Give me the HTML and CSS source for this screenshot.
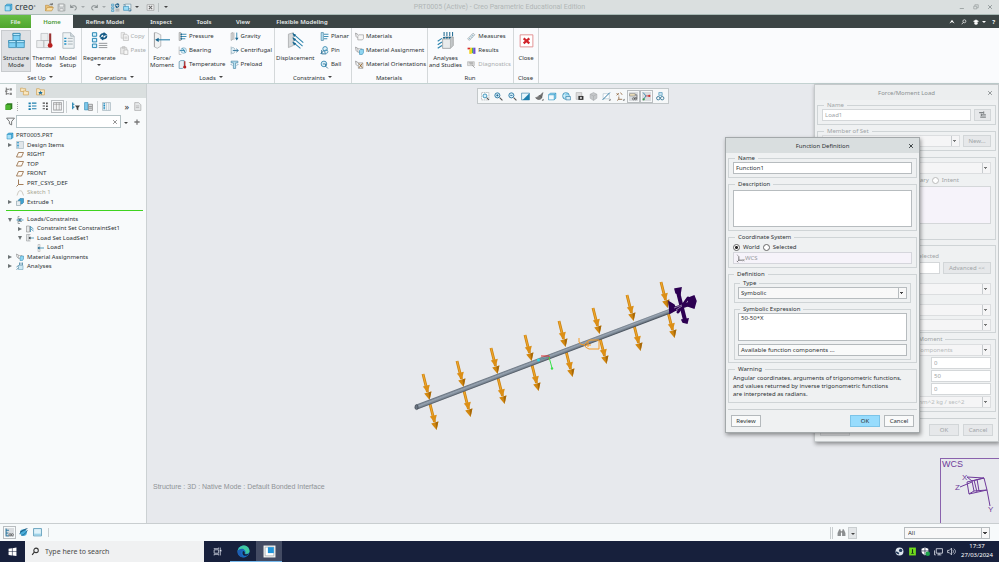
FILE: index.html
```html
<!DOCTYPE html>
<html lang="en">
<head>
  <meta charset="UTF-8">
  <title>PRT0005 (Active) - Creo Parametric Educational Edition</title>
  <link rel="stylesheet" href="styles.css">
</head>
<body>

  <!-- icon sprite -->
  <svg class="sprite" aria-hidden="true">
    <symbol id="i-cube" viewBox="0 0 16 16"><path d="M2 5l3-3h9v9l-3 3H2z" fill="#5cb8e4"/><path d="M2 5h9v9H2z" fill="#a8e0f8"/><path d="M2 5h9v9H2zM2 5l3-3h9v9l-3 3M11 5l3-3" fill="none" stroke="#1f86b5"/></symbol>
    <symbol id="i-style" viewBox="0 0 16 16"><path d="M1 5l3-3h10v9l-3 3H1z" fill="#7fc9ea"/><path d="M1 5h10v9H1z" fill="#f2fafd"/><path d="M1 5h10v9H1zM1 5l3-3h10v9l-3 3M11 5l3-3" fill="none" stroke="#2c93c0"/></symbol>
    <symbol id="i-open" viewBox="0 0 16 16"><path d="M1 14V4h5l1 2h6v3" fill="#e9c27a" stroke="#b98532"/><path d="M1 14l3-6h11l-3 6z" fill="#f5dca4" stroke="#b98532"/><path d="M8 4c1-3 4-3 5-1M13 0v3h-3" fill="none" stroke="#555" stroke-width="1.3"/></symbol>
    <symbol id="i-save" viewBox="0 0 16 16"><path d="M2 2h11l1 1v11H2z" fill="#d2d6d7" stroke="#9ba0a1" stroke-width="1.4"/><path d="M4 2h8v5H4zM5 10h6v4H5z" fill="#eef0f0" stroke="#9ba0a1"/></symbol>
    <symbol id="i-undo" viewBox="0 0 16 16"><path d="M3 3v5h5M3 8c3-5 10-4 10 1 0 2-1 3-3 4" fill="none" stroke="#8b9293" stroke-width="1.8"/></symbol>
    <symbol id="i-redo" viewBox="0 0 16 16"><path d="M13 3v5H8M13 8C10 3 3 4 3 9c0 2 1 3 3 4" fill="none" stroke="#8b9293" stroke-width="1.8"/></symbol>
    <symbol id="i-regen" viewBox="0 0 16 16"><path d="M1 2h4v3H1zM1 7h4v3H1zM1 12h4v3H1z" fill="#c8ecfb" stroke="#1c7fae"/><path d="M8 11h7M8 14h7" stroke="#777"/><path d="M8 5c0-3 3-4 5-3M14 4c0 3-3 4-5 3" fill="none" stroke="#155a86" stroke-width="1.8"/><path d="M12 0l3 3-4 1zM10 9L7 6l4-1z" fill="#155a86"/></symbol>
    <symbol id="i-windows" viewBox="0 0 16 16"><path d="M4 2h10v8H4z" fill="#eaf6fb" stroke="#5d7d8d"/><path d="M1 6h9v7H1z" fill="#9bdcf6" stroke="#1c7fae"/><path d="M10 14h4v-3M2 4V2" fill="none" stroke="#155a86" stroke-width="1.4"/></symbol>
    <symbol id="i-closewin" viewBox="0 0 16 16"><path d="M2 3h12v10H2z" fill="#f3f4f4" stroke="#888"/><path d="M5 5l6 6M11 5l-6 6" stroke="#666" stroke-width="1.8"/></symbol>
    <symbol id="i-min" viewBox="0 0 16 16"><path d="M2 12h11" stroke="#8e9596" stroke-width="2"/></symbol>
    <symbol id="i-restore" viewBox="0 0 16 16"><path d="M2 6h8v7H2zM5 6V2h9v8h-4" fill="none" stroke="#8e9596" stroke-width="1.6"/></symbol>
    <symbol id="i-x" viewBox="0 0 16 16"><path d="M3 3l10 10M13 3L3 13" stroke="currentColor" stroke-width="2.4"/></symbol>
    <symbol id="i-up" viewBox="0 0 16 16"><path d="M1 12l7-10 7 10-7-4z" fill="#fff"/></symbol>
    <symbol id="i-mag" viewBox="0 0 16 16"><circle cx="9" cy="6" r="4" fill="none" stroke="currentColor" stroke-width="1.8"/><path d="M6 9l-4 5" stroke="currentColor" stroke-width="2"/></symbol>
    <symbol id="i-learn" viewBox="0 0 16 16"><path d="M1 6l7-4 7 4-7 4zM4 9v4c2 2 6 2 8 0V9" fill="#fff" stroke="#fff"/></symbol>

    <symbol id="i-structure" viewBox="0 0 24 24"><path d="M7 2h10v10H7zM1 12h10v10H1zM12 12h11v10H12z" fill="#7ed0f4" stroke="#2a83ab"/><path d="M7 2h10v3H7zM1 12h10v3H1zM12 12h11v3H12z" fill="#b8e8fb" stroke="#2a83ab"/></symbol>
    <symbol id="i-thermal" viewBox="0 0 24 24"><path d="M7 2h10v10H7zM1 12h10v10H1zM11 12h9v10h-9z" fill="#eceeef" stroke="#b6babc"/><path d="M20 2v14" stroke="#9a3434" stroke-width="3"/><circle cx="20" cy="19" r="3.4" fill="#b81f1f"/></symbol>
    <symbol id="i-model" viewBox="0 0 24 24"><path d="M4 1h11l5 5v17H4z" fill="#eef2f4" stroke="#9eabb3"/><path d="M15 1v5h5" fill="#d5dde2" stroke="#9eabb3"/><path d="M11 9h7M11 13h7M11 17h7" stroke="#8a979f"/><path d="M6 8h3v2H6zM6 12h3v2H6zM6 16h3v2H6z" fill="#2190c4"/></symbol>
    <symbol id="i-regen-l" viewBox="0 0 24 24"><path d="M2 1h6v5H2zM2 9h6v5H2zM2 17h6v5H2z" fill="#d4f0fc" stroke="#1c7fae" stroke-width="1.3"/><path d="M11 16h12M11 19h12M11 22h12" stroke="#8b9093" stroke-width="1.3"/><path d="M13 7c0-4 4-5 6-4M22 5c0 4-4 5-6 4" fill="none" stroke="#155a86" stroke-width="2.4"/><path d="M18 0l5 4-6 2zM17 12l-5-4 6-2z" fill="#155a86"/></symbol>
    <symbol id="i-copy" viewBox="0 0 16 16"><path d="M2 1h6v10H2z" fill="#eee" stroke="#bbb"/><path d="M6 4h6l3 3v8H6z" fill="#f2f2f2" stroke="#aaa"/><path d="M8 9h5M8 11h5" stroke="#bbb"/></symbol>
    <symbol id="i-paste" viewBox="0 0 16 16"><path d="M1 3h11v11H1zM4 1h5v3H4z" fill="#e8e8e8" stroke="#b4b4b4"/><path d="M7 7h7v8H7z" fill="#f6f6f6" stroke="#aaa"/></symbol>
    <symbol id="i-force-l" viewBox="0 0 24 24"><path d="M2 1h3l6 3v16l-5 3-4-2z" fill="#f1f2f3" stroke="#a3a6a8"/><path d="M2 1v20" stroke="#999"/><path d="M5 11h19" stroke="#2c83ac" stroke-width="1.6"/><path d="M3 11l5-3v6z" fill="#17648d"/></symbol>
    <symbol id="i-force" viewBox="0 0 16 16"><path d="M4 1v14M4 1h4v14H4" fill="#eee" stroke="#a5a5a5"/><path d="M5 8h11" stroke="#2c83ac" stroke-width="1.6"/><path d="M3 8l4-3v6z" fill="#17648d"/></symbol>
    <symbol id="i-pressure" viewBox="0 0 16 16"><path d="M2 1h3v14H2z" fill="#ddd" stroke="#888"/><path d="M5 4h10M5 8h10M5 12h8" stroke="#2c83ac" stroke-width="1.6"/><path d="M4 4l3-2v4zM4 8l3-2v4zM4 12l3-2v4z" fill="#17648d"/></symbol>
    <symbol id="i-bearing" viewBox="0 0 16 16"><path d="M2 1v14h4" fill="none" stroke="#999"/><circle cx="10" cy="8" r="5" fill="#d5ecf6" stroke="#6d9db4"/><path d="M3 8h9M8 4l5 8" stroke="#2c83ac" stroke-width="1.5"/></symbol>
    <symbol id="i-temp" viewBox="0 0 16 16"><path d="M2 3l3-2h6v11l-3 3H2z" fill="#e6f1f6" stroke="#2b6f91"/><path d="M12 2v9" stroke="#a33" stroke-width="2.4"/><circle cx="12" cy="12.500" r="2.800" fill="#b81f1f"/></symbol>
    <symbol id="i-gravity" viewBox="0 0 16 16"><path d="M2 2l3-1v12l-3 2zM7 1v13" fill="#eee" stroke="#888"/><path d="M12 1v11" stroke="#2c83ac" stroke-width="1.6"/><path d="M12 15l-3-5h6z" fill="#17648d"/></symbol>
    <symbol id="i-centri" viewBox="0 0 16 16"><path d="M2 1v14M2 4c4-3 7 0 7 4s-3 7-7 4" fill="#e2f0f7" stroke="#7796a5"/><path d="M5 8h9M11 5l4 3-4 3" fill="none" stroke="#17648d" stroke-width="1.4"/></symbol>
    <symbol id="i-preload" viewBox="0 0 16 16"><path d="M2 2h12v3h-4v10H6V5H2z" fill="#b7e1f3" stroke="#2b6f91"/><path d="M1 7l3 3M15 7l-3 3" stroke="#17648d"/></symbol>
    <symbol id="i-disp-l" viewBox="0 0 24 24"><path d="M2 3l7-2v18l-7 3z" fill="#d7d9da" stroke="#a0a3a5"/><path d="M8 2l15 13M8 8l14 12M8 14l11 9" stroke="#2c83ac" stroke-width="1.5"/><path d="M8 2l5 2-3 3zM8 8l5 2-3 3zM8 14l5 2-3 3z" fill="#17648d"/></symbol>
    <symbol id="i-planar" viewBox="0 0 16 16"><path d="M2 1h4v14H2z" fill="#b7e1f3" stroke="#2b6f91"/><path d="M7 4h8M7 8h8M7 12h6" stroke="#2c83ac" stroke-width="1.6"/></symbol>
    <symbol id="i-pin" viewBox="0 0 16 16"><circle cx="9" cy="5" r="4" fill="#dff2fa" stroke="#2c83ac" stroke-width="1.5"/><path d="M1 14l6-6M3 7v7h8" fill="none" stroke="#17648d" stroke-width="1.5"/><circle cx="11" cy="10" r="3" fill="none" stroke="#2c83ac" stroke-width="1.3"/></symbol>
    <symbol id="i-ball" viewBox="0 0 16 16"><circle cx="7" cy="7" r="5" fill="#dff2fa" stroke="#2c83ac" stroke-width="1.5"/><path d="M5 7h5v4M10 11l4 4" fill="none" stroke="#17648d" stroke-width="1.4"/></symbol>
    <symbol id="i-mat" viewBox="0 0 16 16"><path d="M1 2l5 3M1 2l1 6 3 3" fill="none" stroke="#666"/><path d="M5 7l2-2h8v7l-2 2H5z" fill="#f7f7f7" stroke="#888"/></symbol>
    <symbol id="i-mata" viewBox="0 0 16 16"><path d="M1 2l5 3M1 2l1 6 3 3" fill="none" stroke="#666"/><path d="M5 5h7v6H5z" fill="#f7f7f7" stroke="#888"/><path d="M8 8l2-2h5v6l-2 3H8z" fill="#8fd5f1" stroke="#2b85ae"/></symbol>
    <symbol id="i-mato" viewBox="0 0 16 16"><path d="M1 2l5 3M1 2l1 6 3 3" fill="none" stroke="#666"/><path d="M6 5h8v10H6z" fill="#eee" stroke="#888"/><path d="M7 6l6 8M13 6l-6 8" stroke="#8a5a20" stroke-width="1.4"/></symbol>
    <symbol id="i-analyses-l" viewBox="0 0 24 24"><path d="M8 10l3-3h12v12l-4 4H8z" fill="#c3c7c9" stroke="#96999b"/><path d="M8 10h11v13H8z" fill="#e9ebec" stroke="#a5a8aa"/><path d="M10 0v6M14 0v6M18 0v6M22 0v6" stroke="#17648d" stroke-width="1.4"/><path d="M8 7l4 0-2 3zM12 7h4l-2 3zM16 7h4l-2 3z" fill="#17648d"/><path d="M1 13l6-4M1 18l6-4M1 23l6-4" stroke="#2c83ac" stroke-width="1.6"/></symbol>
    <symbol id="i-measure" viewBox="0 0 16 16"><path d="M1 12L11 2l3 3L4 15z" fill="#e4eaed" stroke="#87959c"/><path d="M4 11l2 2M7 8l2 2M9 5l2 2" stroke="#2c83ac"/></symbol>
    <symbol id="i-results" viewBox="0 0 16 16"><path d="M1 3h5v3H1z" fill="#d82a2a"/><path d="M4 6h4v8H4z" fill="#f2d325"/><path d="M6 3h3v10H6z" fill="#f2d325"/><path d="M9 3h2v10H9z" fill="#3fae49"/><path d="M11 3h4v11h-4z" fill="#6a4fd0"/></symbol>
    <symbol id="i-diag" viewBox="0 0 16 16"><path d="M1 3h12v7H1z" fill="#e2e2e2" stroke="#aaa"/><path d="M3 5h8M5 7h6M9 9l5 5" stroke="#999" stroke-width="1.4"/></symbol>
    <symbol id="i-closered" viewBox="0 0 24 24"><path d="M3 4h18v17H3z" fill="#fff" stroke="#e08a8c" stroke-width="1.3"/><path d="M8 9l8 7M16 9l-8 7" stroke="#d2232a" stroke-width="3"/></symbol>

    <symbol id="i-treetab" viewBox="0 0 16 16"><path d="M4 1v13M4 4h5M4 12h5" stroke="#666" stroke-width="1.6"/><path d="M10 2h4v4h-4zM10 10h4v4h-4zM2 6h4v3H2z" fill="#888"/></symbol>
    <symbol id="i-folders" viewBox="0 0 16 16"><path d="M1 2h4l1 1h4v5H1z" fill="#f9e7c0" stroke="#c8943d"/><path d="M6 7h4l1 1h4v6H6z" fill="#f9e7c0" stroke="#c8943d"/></symbol>
    <symbol id="i-fav" viewBox="0 0 16 16"><path d="M1 3h5l1 2h8v9H1z" fill="#f9e7c0" stroke="#c8943d"/><path d="M8 6l1 3h3l-2 2 1 3-3-2-3 2 1-3-2-2h3z" fill="#1c6e9c"/></symbol>
    <symbol id="i-green" viewBox="0 0 16 16"><path d="M1 5l3-3h9v9l-3 3H1z" fill="#2e7a1f"/><path d="M1 5h9v9H1z" fill="#4db52f"/></symbol>
    <symbol id="i-list" viewBox="0 0 16 16"><path d="M1 1h4v3H1zM1 6h4v3H1zM1 11h4v3H1z" fill="#1c7fae"/><path d="M7 2h8M7 7h8M7 12h8" stroke="#1c7fae" stroke-width="2"/></symbol>
    <symbol id="i-list2" viewBox="0 0 16 16"><path d="M3 2h4M3 7h4M3 12h4" stroke="#444" stroke-width="2"/><path d="M9 1h3v3H9zM9 6h3v3H9zM9 11h3v3H9z" fill="#444"/></symbol>
    <symbol id="i-cols" viewBox="0 0 16 16"><path d="M1 1h14v13H1zM1 4h14M6 1v13M11 1v13" fill="#f3f4f5" stroke="#888"/></symbol>
    <symbol id="i-tfilter" viewBox="0 0 16 16"><path d="M3 1v12M3 4h3M3 9h3" stroke="#1c7fae" stroke-width="2"/><path d="M7 6h9l-3 4v5l-3-2v-3z" fill="#444"/></symbol>
    <symbol id="i-tcols" viewBox="0 0 16 16"><path d="M1 1h6v13H1z" fill="#7fc9ea" stroke="#1c7fae"/><path d="M8 4h7v11H8z" fill="#d9dcde" stroke="#666"/><path d="M9 8h5M9 11h5" stroke="#666"/></symbol>
    <symbol id="i-design" viewBox="0 0 16 16"><path d="M1 1h14v14H1z" fill="#f3f6f8" stroke="#8aa0ac"/><path d="M4 2v12" stroke="#1c8bc0" stroke-width="3" stroke-dasharray="2 1"/><path d="M8 1v14M12 1v14" stroke="#a9b7bf"/></symbol>
    <symbol id="i-page" viewBox="0 0 16 16"><path d="M3 1h7l4 4v10H3z" fill="#e6e8e9" stroke="#999"/><path d="M5 7h6M5 10h6" stroke="#999"/></symbol>
    <symbol id="i-funnel" viewBox="0 0 16 16"><path d="M1 2h14L10 8v6l-4-2V8z" fill="#f8fafb" stroke="#555" stroke-width="1.4"/></symbol>
    <symbol id="i-plus" viewBox="0 0 16 16"><path d="M8 1v14M1 8h14" stroke="#777" stroke-width="3.4"/></symbol>
    <symbol id="i-plane" viewBox="0 0 16 16"><path d="M5 3h10l-4 9H1z" fill="#fdfaf5" stroke="#8b5e34" stroke-width="1.500"/></symbol>
    <symbol id="i-csys" viewBox="0 0 16 16"><path d="M5 1v10h10M5 11l-4 4" fill="none" stroke="#8b5e34" stroke-width="1.6"/></symbol>
    <symbol id="i-sketch" viewBox="0 0 16 16"><path d="M2 13l3-8c2-2 5-2 7 0l3 8" fill="none" stroke="#bdb8ae" stroke-width="1.5"/></symbol>
    <symbol id="i-extrude" viewBox="0 0 16 16"><path d="M5 4l3-3h7v8l-3 3H5z" fill="#3fa2d0" stroke="#1c6e9c"/><path d="M1 6h8v9H1z" fill="#e8eef1" stroke="#6f8793"/></symbol>
    <symbol id="i-lc" viewBox="0 0 16 16"><path d="M7 1H4v14h4M4 5h8M4 11h8" fill="none" stroke="#7c858a" stroke-width="1.4"/><path d="M1 8h14" stroke="#1c7fae" stroke-width="1.4"/><path d="M5 8l4-3v6z" fill="#155a86"/></symbol>
    <symbol id="i-lset" viewBox="0 0 16 16"><path d="M1 1h5v13H1zM6 1h3M6 14h3" fill="#e3e5e6" stroke="#8b8f91"/><path d="M7 8h9" stroke="#2c83ac" stroke-width="1.5"/><path d="M5 8l4-3v6z" fill="#333"/></symbol>
    <symbol id="i-cset" viewBox="0 0 16 16"><path d="M1 2h6v12H1z" fill="#e8eaeb" stroke="#777"/><path d="M9 2v12M10 4l5 4M10 8l5 4" stroke="#2c83ac" stroke-width="1.5"/></symbol>
    <symbol id="i-study" viewBox="0 0 16 16"><path d="M5 7h9v8H5z" fill="#cfe9f5" stroke="#5a93ad"/><path d="M7 1v5M10 1v5M13 1v5M1 10l4-3M1 15l4-3" stroke="#17648d" stroke-width="1.3"/></symbol>

    <symbol id="i-refit" viewBox="0 0 16 16"><path d="M1 1h13v13H1z" fill="#fff" stroke="#8f9698" stroke-dasharray="3 1"/><circle cx="7" cy="7" r="3.500" fill="#d7f0fa" stroke="#1c7fae" stroke-width="1.400"/><path d="M10 10l4 4" stroke="#555" stroke-width="2"/></symbol>
    <symbol id="i-zin" viewBox="0 0 16 16"><circle cx="6" cy="6" r="4.5" fill="#d7f0fa" stroke="#1c6e9c" stroke-width="1.5"/><path d="M4 6h4M6 4v4" stroke="#155a86" stroke-width="1.4"/><path d="M10 10l5 5" stroke="#555" stroke-width="2"/></symbol>
    <symbol id="i-zout" viewBox="0 0 16 16"><circle cx="6" cy="6" r="4.5" fill="#d7f0fa" stroke="#1c6e9c" stroke-width="1.5"/><path d="M4 6h4" stroke="#155a86" stroke-width="1.4"/><path d="M10 10l5 5" stroke="#555" stroke-width="2"/></symbol>
    <symbol id="i-repaint" viewBox="0 0 16 16"><path d="M1 2h14v12H1z" fill="#e6f6fc" stroke="#1c6e9c"/><path d="M15 2v12H3z" fill="#1c7fae"/></symbol>
    <symbol id="i-brush" viewBox="0 0 16 16"><path d="M14 1L8 7l4 3zM9 6c-3 0-4 4-8 4 2 4 11 5 11-1z" fill="#777" stroke="#555"/><path d="M12 15h3v-3z" fill="#333"/></symbol>
    <symbol id="i-globe" viewBox="0 0 16 16"><circle cx="7" cy="7" r="6" fill="#8ed3ef" stroke="#1c6e9c"/><path d="M1 7h12M7 1c-4 4-4 8 0 12" fill="none" stroke="#fff"/><path d="M7 8h8v6H7z" fill="#d5ecf6" stroke="#1c6e9c"/></symbol>
    <symbol id="i-camera" viewBox="0 0 16 16"><path d="M2 1h10v12H2z" fill="#ddd" stroke="#aaa"/><path d="M6 7h9v7H6z" fill="#333"/><circle cx="10.500" cy="10.500" r="2" fill="#ccc"/></symbol>
    <symbol id="i-greycube" viewBox="0 0 16 16"><path d="M2 4l6-3 6 3v7l-6 4-6-4z" fill="#c5c8ca" stroke="#a5a9ab"/><path d="M2 4l6 3 6-3M8 7v8" fill="none" stroke="#a5a9ab"/></symbol>
    <symbol id="i-section" viewBox="0 0 16 16"><path d="M2 3h11v9H2z" fill="#fff" stroke="#9fb8c4"/><path d="M1 14L14 1" stroke="#1c6e9c" stroke-width="1.6"/><path d="M12 15h3v-3z" fill="#333"/></symbol>
    <symbol id="i-datum" viewBox="0 0 16 16"><path d="M1 2l4 4M5 2L1 6M8 1l3 4M5 8v5h6M5 13l-3 2" fill="none" stroke="#8b5e34" stroke-width="1.4"/><path d="M12 15h3v-3z" fill="#333"/></symbol>
    <symbol id="i-annot" viewBox="0 0 16 16"><path d="M1 3h10v4H1z" fill="#f6e7bf" stroke="#777"/><path d="M11 5h3v6H8" fill="none" stroke="#444"/><circle cx="8" cy="12" r="2" fill="none" stroke="#444"/><circle cx="12" cy="12" r="2" fill="none" stroke="#444"/></symbol>
    <symbol id="i-spin" viewBox="0 0 16 16"><path d="M2 1l5 6-5 7" fill="none" stroke="#2c83ac" stroke-width="1.5"/><path d="M7 7h6" stroke="#c33" stroke-width="1.5"/><circle cx="13" cy="7" r="2" fill="#c33"/><circle cx="3" cy="13" r="2" fill="#3b9b4a"/></symbol>
    <symbol id="i-sims" viewBox="0 0 16 16"><path d="M5 1h6v5H5z" fill="#cfe9f5" stroke="#2c83ac"/><circle cx="4" cy="11" r="3" fill="none" stroke="#2c6f91" stroke-width="1.5"/><circle cx="11" cy="11" r="3" fill="none" stroke="#2c6f91" stroke-width="1.5"/></symbol>
    <symbol id="i-flip" viewBox="0 0 16 16"><path d="M2 3h8M6 7h8M4 11h10M10 1v4M6 5v4" stroke="#808487" stroke-width="2.200"/></symbol>
    <symbol id="i-wcs" viewBox="0 0 16 16"><path d="M5 4v7h7M5 11l-3 3" fill="none" stroke="#555" stroke-width="1.4"/><path d="M2 1l2 3M1 12l3 3M12 9l3 4M15 9l-3 4" stroke="#777"/></symbol>

    <symbol id="i-nav" viewBox="0 0 16 16"><path d="M2 1v13h5M2 4h5M2 9h4" fill="none" stroke="#1c6e9c" stroke-width="1.6"/><circle cx="9" cy="12" r="2" fill="none" stroke="#333"/><circle cx="13" cy="12" r="2" fill="none" stroke="#333"/></symbol>
    <symbol id="i-browser" viewBox="0 0 16 16"><circle cx="8" cy="8" r="6" fill="#4aaedb"/><path d="M2 6c4 0 8-2 11-4M4 13c5 0 8-4 11-9M1 11C4 5 9 2 15 1" fill="none" stroke="#15587f" stroke-width="1.400"/></symbol>
    <symbol id="i-screen" viewBox="0 0 16 16"><path d="M1 1h14v13H1z" fill="#dff2fa" stroke="#4a8fb0" stroke-width="1.4"/><path d="M2 10h12v3H2z" fill="#9bd3ea"/></symbol>
    <symbol id="i-find" viewBox="0 0 16 16"><path d="M4 2h2l1 4v8H1V9zM12 2h-2L9 6v8h6V9z" fill="#8c8f91"/><path d="M6 7h4" stroke="#777" stroke-width="2"/></symbol>

    <symbol id="i-win" viewBox="0 0 16 16"><path d="M1 3l6-1v6H1zM8 2l7-1v7H8zM1 9h6v6l-6-1zM8 9h7v7l-7-1z" fill="#fff"/></symbol>
    <symbol id="i-task" viewBox="0 0 16 16"><path d="M2 5h8v6H2zM2 2v1h8V1M2 15v-2h8v2M13 1v4M13 8v7" fill="none" stroke="#dfe3ee" stroke-width="1.3"/><path d="M12 5h3v3h-3z" fill="#dfe3ee"/></symbol>
    <symbol id="i-edge" viewBox="0 0 24 24"><circle cx="12" cy="12" r="11" fill="#1673c9"/><path d="M1 11C3 3 10 0 15 1c6 2 9 7 8 12-1 3-5 4-8 3 2-3 0-8-5-8-4 0-7 1-9 3z" fill="#3fc7a0"/><path d="M1 11c4-5 11-5 13-1-4-1-7 2-6 6 1 4 4 6 8 6C8 25 0 19 1 11z" fill="#1d5fb4"/><path d="M11 11c3 0 4 3 3 5 2 2 6 1 8-1-1 3-4 5-7 5-4 0-6-4-4-9z" fill="#17203c"/></symbol>
    <symbol id="i-app" viewBox="0 0 24 24"><path d="M1 1h22v22H1z" fill="#f3f3f1"/><path d="M4 4h16v16H4z" fill="#fff" stroke="#7c8b94"/><path d="M9 4h11v11H9z" fill="#1f94da"/></symbol>
    <symbol id="i-steam" viewBox="0 0 16 16"><circle cx="8" cy="8" r="7" fill="#dfe6ee"/><circle cx="10" cy="6" r="3" fill="#223a5c"/><path d="M2 9l5 3" stroke="#223a5c" stroke-width="3"/></symbol>
    <symbol id="i-nv" viewBox="0 0 16 16"><path d="M2 1h12v14H2z" fill="#6fdb1c"/><path d="M5 12l2-2V5c0-2 2-2 2 0v5l2 2z" fill="#17301a"/></symbol>
    <symbol id="i-shield" viewBox="0 0 16 16"><path d="M7 1l6 2v5c0 3-3 5-6 7-3-2-6-4-6-7V3z" fill="#fff"/><path d="M7 1v14M1 7h12" stroke="#17203c" stroke-width="1.2"/><circle cx="12" cy="12" r="4" fill="#1ea54a"/></symbol>
    <symbol id="i-net" viewBox="0 0 16 16"><path d="M4 3h11v8H4zM9 11v3M6 14h7M1 6v8h2" fill="none" stroke="#e8ebf3" stroke-width="1.4"/></symbol>
    <symbol id="i-vol" viewBox="0 0 16 16"><path d="M1 6h3l4-4v12l-4-4H1z" fill="none" stroke="#e8ebf3" stroke-width="1.3"/><path d="M10 5c2 2 2 4 0 6M12 3c4 3 4 7 0 10" fill="none" stroke="#e8ebf3" stroke-width="1.2"/></symbol>
  </svg>

  <header class="titlebar">
    <div class="quick">
      <span class="brand"><svg class="ic"><use href="#i-cube"/></svg>creo<sup>°</sup></span>
      <button aria-label="Open"><svg class="ic"><use href="#i-open"/></svg></button>
      <button aria-label="Save"><svg class="ic"><use href="#i-save"/></svg></button>
      <button class="drop soft" aria-label="Undo"><svg class="ic"><use href="#i-undo"/></svg></button>
      <button class="drop soft" aria-label="Redo"><svg class="ic"><use href="#i-redo"/></svg></button>
      <button aria-label="Regenerate"><svg class="ic"><use href="#i-regen"/></svg></button>
      <button class="drop" aria-label="Windows"><svg class="ic"><use href="#i-windows"/></svg></button>
      <button class="last" aria-label="Close window"><svg class="ic"><use href="#i-closewin"/></svg></button>
      <button class="drop" aria-label="Customize"></button>
    </div>
    <div class="app-title">PRT0005 (Active) - Creo Parametric Educational Edition</div>
    <div class="win-controls">
      <button aria-label="Minimize"><svg class="ic-s"><use href="#i-min"/></svg></button>
      <button aria-label="Restore"><svg class="ic-s"><use href="#i-restore"/></svg></button>
      <button aria-label="Close"><svg class="ic-s"><use href="#i-x"/></svg></button>
    </div>
  </header>

  <nav class="tabs">
    <button class="tab file">File</button>
    <button class="tab home">Home</button>
    <button class="tab refine">Refine Model</button>
    <button class="tab inspect">Inspect</button>
    <button class="tab tools">Tools</button>
    <button class="tab view">View</button>
    <button class="tab flexible">Flexible Modeling</button>
    <div class="tab-tools">
      <button aria-label="Collapse ribbon"><svg class="ic-s"><use href="#i-up"/></svg></button>
      <button aria-label="Search"><svg class="ic-s"><use href="#i-mag"/></svg></button>
      <button class="drop" aria-label="Learning"><svg class="ic-s"><use href="#i-learn"/></svg></button>
      <button>?</button>
    </div>
  </nav>

  <div class="ribbon">
    <section class="group setup">
      <div class="group-body">
        <button class="big active"><svg><use href="#i-structure"/></svg>Structure<br>Mode</button>
        <button class="big"><svg><use href="#i-thermal"/></svg>Thermal<br>Mode</button>
        <button class="big"><svg><use href="#i-model"/></svg>Model<br>Setup</button>
      </div>
      <div class="group-label drop">Set Up</div>
    </section>
    <section class="group operations">
      <div class="group-body">
        <button class="big"><svg><use href="#i-regen-l"/></svg>Regenerate<span class="caret"></span></button>
        <div class="stack">
          <button class="small" disabled><svg><use href="#i-copy"/></svg>Copy</button>
          <button class="small" disabled><svg><use href="#i-paste"/></svg>Paste</button>
        </div>
      </div>
      <div class="group-label drop">Operations</div>
    </section>
    <section class="group loads">
      <div class="group-body">
        <button class="big"><svg><use href="#i-force-l"/></svg>Force/<br>Moment</button>
        <div class="stack">
          <button class="small"><svg><use href="#i-pressure"/></svg>Pressure</button>
          <button class="small"><svg><use href="#i-bearing"/></svg>Bearing</button>
          <button class="small"><svg><use href="#i-temp"/></svg>Temperature</button>
        </div>
        <div class="stack">
          <button class="small"><svg><use href="#i-gravity"/></svg>Gravity</button>
          <button class="small"><svg><use href="#i-centri"/></svg>Centrifugal</button>
          <button class="small"><svg><use href="#i-preload"/></svg>Preload</button>
        </div>
      </div>
      <div class="group-label drop">Loads</div>
    </section>
    <section class="group constraints">
      <div class="group-body">
        <button class="big"><svg><use href="#i-disp-l"/></svg>Displacement</button>
        <div class="stack">
          <button class="small"><svg><use href="#i-planar"/></svg>Planar</button>
          <button class="small"><svg><use href="#i-pin"/></svg>Pin</button>
          <button class="small"><svg><use href="#i-ball"/></svg>Ball</button>
        </div>
      </div>
      <div class="group-label drop">Constraints</div>
    </section>
    <section class="group materials">
      <div class="group-body">
        <div class="stack">
          <button class="small"><svg><use href="#i-mat"/></svg>Materials</button>
          <button class="small"><svg><use href="#i-mata"/></svg>Material Assignment</button>
          <button class="small"><svg><use href="#i-mato"/></svg>Material Orientations</button>
        </div>
      </div>
      <div class="group-label">Materials</div>
    </section>
    <section class="group run">
      <div class="group-body">
        <button class="big"><svg><use href="#i-analyses-l"/></svg>Analyses<br>and Studies</button>
        <div class="stack">
          <button class="small"><svg><use href="#i-measure"/></svg>Measures</button>
          <button class="small"><svg><use href="#i-results"/></svg>Results</button>
          <button class="small" disabled><svg><use href="#i-diag"/></svg>Diagnostics</button>
        </div>
      </div>
      <div class="group-label">Run</div>
    </section>
    <section class="group close">
      <div class="group-body">
        <button class="big"><svg><use href="#i-closered"/></svg>Close</button>
      </div>
      <div class="group-label">Close</div>
    </section>
  </div>

  <main class="work">
    <aside class="panel">
      <div class="panel-tabs">
        <button class="on" aria-label="Model tree"><svg class="ic"><use href="#i-treetab"/></svg></button>
        <button aria-label="Folders"><svg class="ic"><use href="#i-folders"/></svg></button>
        <button aria-label="Favorites"><svg class="ic"><use href="#i-fav"/></svg></button>
      </div>
      <div class="panel-tools">
        <button class="grip" aria-label="Model"><svg class="ic"><use href="#i-green"/></svg></button>
        <button aria-label="Expand"><svg class="ic"><use href="#i-list"/></svg></button>
        <button aria-label="Collapse"><svg class="ic"><use href="#i-list2"/></svg></button>
        <button class="pressed" aria-label="Columns"><svg class="ic"><use href="#i-cols"/></svg></button>
        <span class="rule"></span>
        <button aria-label="Tree filters"><svg class="ic"><use href="#i-tfilter"/></svg></button>
        <button aria-label="Tree columns"><svg class="ic"><use href="#i-tcols"/></svg></button>
        <span class="rule"></span>
        <button aria-label="Design items"><svg class="ic"><use href="#i-design"/></svg></button>
        <button class="more">»</button>
        <button aria-label="Settings"><svg class="ic"><use href="#i-page"/></svg></button>
      </div>
      <div class="panel-search">
        <svg class="ic"><use href="#i-funnel"/></svg>
        <div class="search-box">
          <input type="text" aria-label="Search tree">
          <button aria-label="Clear"><svg class="ic-s"><use href="#i-x"/></svg></button>
        </div>
        <button class="drop" aria-label="Search options"></button>
        <button aria-label="Add"><svg class="ic-s"><use href="#i-plus"/></svg></button>
      </div>
      <ul class="tree model-tree">
        <li class="root"><svg><use href="#i-cube"/></svg>PRT0005.PRT</li>
        <li><i class="fold"></i><svg><use href="#i-design"/></svg>Design Items</li>
        <li><i></i><svg><use href="#i-plane"/></svg>RIGHT</li>
        <li><i></i><svg><use href="#i-plane"/></svg>TOP</li>
        <li><i></i><svg><use href="#i-plane"/></svg>FRONT</li>
        <li><i></i><svg><use href="#i-csys"/></svg>PRT_CSYS_DEF</li>
        <li class="muted"><i></i><svg><use href="#i-sketch"/></svg>Sketch 1</li>
        <li><i class="fold"></i><svg><use href="#i-extrude"/></svg>Extrude 1</li>
      </ul>
      <div class="insert-line"></div>
      <ul class="tree sim-tree">
        <li><i class="fold open"></i><svg><use href="#i-lc"/></svg>Loads/Constraints</li>
        <li class="lvl2"><i class="fold"></i><svg><use href="#i-cset"/></svg>Constraint Set ConstraintSet1</li>
        <li class="lvl2"><i class="fold open"></i><svg><use href="#i-lset"/></svg>Load Set LoadSet1</li>
        <li class="lvl3"><i></i><svg><use href="#i-force"/></svg>Load1</li>
        <li><i class="fold"></i><svg><use href="#i-mata"/></svg>Material Assignments</li>
        <li><i class="fold"></i><svg><use href="#i-study"/></svg>Analyses</li>
      </ul>
    </aside>

    <div class="viewport">
      <svg class="scene" viewBox="147 84 852 439" preserveAspectRatio="xMinYMin meet">
        <defs>
          <linearGradient id="rod" gradientUnits="userSpaceOnUse" x1="543.2" y1="356.7" x2="544.8" y2="360.9">
            <stop offset="0" stop-color="#6d7884"/>
            <stop offset="0.35" stop-color="#98a4b2"/>
            <stop offset="0.7" stop-color="#7b8794"/>
            <stop offset="1" stop-color="#4a535e"/>
          </linearGradient>
          <g id="arrow">
            <path d="M0 0L4.500 18" stroke="#c98210" stroke-width="2.8"/>
            <path d="M0 0L4.500 18" stroke="#f0a62c" stroke-width="1.2"/>
            <path d="M-0.200 12.500L6.800 10.800L4.900 18.800z" fill="#dc8f16"/>
            <path d="M1.200 19.500L8.400 17.600L6.600 26z" fill="#d2870f"/>
            <path d="M5.400 18.400L8.400 17.600L6.600 26z" fill="#a7690a"/>
          </g>
          <g id="load">
            <use href="#arrow"/>
            <use href="#arrow" x="7" y="30"/>
          </g>
        </defs>
        <use href="#load" x="423" y="374"/>
        <use href="#load" x="457" y="361"/>
        <use href="#load" x="491" y="348"/>
        <use href="#load" x="525" y="335"/>
        <use href="#load" x="559" y="321"/>
        <use href="#load" x="593" y="308"/>
        <use href="#load" x="627" y="295"/>
        <use href="#load" x="661" y="282"/>
        <path d="M415.500 404.800L671 308.300L672.500 312.700L417.200 409.500z" fill="url(#rod)"/>
        <ellipse cx="416.500" cy="407.200" rx="1.600" ry="2.400" fill="#6b7683" stroke="#343b44" stroke-width="0.6"/>
        <!-- load tag and origin triad -->
        <path d="M579 338v4q1 3 5 3l4-4q1-1 3-1h8v9h-10q-4-1-5-5M586 345h5M588 342v5" fill="none" stroke="#f59a22"/>
        <path d="M541 356h8v3" fill="none" stroke="#e02d2d"/>
        <path d="M538 360l11-3" stroke="#5b8f97"/>
        <circle cx="538.500" cy="360" r="1.500" fill="#28dbe6"/>
        <path d="M549 357l3 11" stroke="#38e04a"/>
        <circle cx="552" cy="368.500" r="1.200" fill="#38e04a"/>
        <!-- constraint glyph -->
        <g stroke="#2d0052" stroke-linecap="round" fill="#2d0052">
          <path d="M678 292l7 28M674 309l18-6" stroke-width="4"/>
          <path d="M675 289l6-1-1 6-4-1zM682 320l6-1-1 4-4-1zM689 298l5-2 2 5-2 7-6-2zM669 302l5 3 2 5-6 3z" stroke-width="1.5"/>
          <path d="M678 312l10-14" stroke-width="3"/>
        </g>
        <path d="M674 308l8-3M676 310l6-4" stroke="#a69bb8" stroke-width="0.8"/>
      </svg>

      <div class="view-tools">
        <button aria-label="Refit"><svg class="ic"><use href="#i-refit"/></svg></button>
        <button aria-label="Zoom in"><svg class="ic"><use href="#i-zin"/></svg></button>
        <button aria-label="Zoom out"><svg class="ic"><use href="#i-zout"/></svg></button>
        <button aria-label="Repaint"><svg class="ic"><use href="#i-repaint"/></svg></button>
        <button aria-label="Rendering"><svg class="ic"><use href="#i-brush"/></svg></button>
        <button aria-label="Display style"><svg class="ic"><use href="#i-style"/></svg></button>
        <button aria-label="Saved views"><svg class="ic"><use href="#i-globe"/></svg></button>
        <button aria-label="Camera"><svg class="ic"><use href="#i-camera"/></svg></button>
        <button aria-label="Perspective"><svg class="ic"><use href="#i-greycube"/></svg></button>
        <button aria-label="Section"><svg class="ic"><use href="#i-section"/></svg></button>
        <button aria-label="Datum display"><svg class="ic"><use href="#i-datum"/></svg></button>
        <button class="pressed" aria-label="Annotations"><svg class="ic"><use href="#i-annot"/></svg></button>
        <button class="pressed" aria-label="Spin center"><svg class="ic"><use href="#i-spin"/></svg></button>
        <button aria-label="Simulation display"><svg class="ic"><use href="#i-sims"/></svg></button>
      </div>

      <div class="mode-text">Structure : 3D : Native Mode : Default Bonded Interface</div>

      <div class="wcs-box">
        <span>WCS</span>
        <svg viewBox="0 0 58 52">
          <path d="M26 13L43 9L46 21L28 25zM26 8L43 9M26 8L31 12L33 22L46 21M33 11L36 23M36 10L38 22M31 12L43 9M28 25L33 22M19 18L31 13M46 21L49 37" fill="none" stroke="#6f3b9b"/>
          <text x="21" y="11">X</text>
          <text x="14" y="21">Z</text>
          <text x="47" y="43">Y</text>
        </svg>
      </div>

      <form class="dialog force">
        <div class="dialog-title">Force/Moment Load<button type="button" aria-label="Close"><svg class="ic-s"><use href="#i-x"/></svg></button></div>
        <fieldset disabled>
          <legend>Name</legend>
          <div class="line">
            <input class="grow" type="text" value="Load1" aria-label="Load name">
            <button class="btn icon" aria-label="Color"><svg class="ic"><use href="#i-flip"/></svg></button>
          </div>
        </fieldset>
        <fieldset disabled>
          <legend>Member of Set</legend>
          <div class="line">
            <select class="grow" aria-label="Load set"><option></option></select>
            <button class="btn new">New...</button>
          </div>
        </fieldset>
        <fieldset disabled class="refs" aria-label="References">
          <select aria-label="Reference type"><option></option></select>
          <div class="line radios end">
            <label><input type="radio" name="ref">Boundary</label>
            <label><input type="radio" name="ref">Intent</label>
          </div>
          <textarea class="lilac" aria-label="Surfaces"></textarea>
        </fieldset>
        <fieldset disabled class="props" aria-label="Properties">
          <label class="selected-label"><input type="radio" name="cs">Selected</label>
          <div class="line">
            <input class="grow lilac" type="text" aria-label="Coordinate system">
            <button class="btn adv">Advanced &lt;&lt;</button>
          </div>
          <select aria-label="Distribution"><option></option></select>
          <select aria-label="Variation"><option></option></select>
          <select aria-label="Function"><option></option></select>
        </fieldset>
        <div class="pair">
          <fieldset disabled class="moment">
            <legend>Moment</legend>
            <select aria-label="Moment type"><option>Components</option></select>
            <input type="text" value="0" aria-label="Moment X">
            <input type="text" value="50" aria-label="Moment Y">
            <input type="text" value="0" aria-label="Moment Z">
            <select aria-label="Moment units"><option>mm^2 kg / sec^2</option></select>
          </fieldset>
        </div>
        <div class="dialog-actions">
          <button class="btn" disabled aria-label="Preview"></button>
          <span class="grow"></span>
          <button class="btn" disabled>OK</button>
          <button class="btn" disabled>Cancel</button>
        </div>
      </form>

      <form class="dialog function">
        <div class="dialog-title">Function Definition<button type="button" aria-label="Close"><svg class="ic-s"><use href="#i-x"/></svg></button></div>
        <fieldset>
          <legend>Name</legend>
          <input type="text" value="Function1" aria-label="Name">
        </fieldset>
        <fieldset class="description">
          <legend>Description</legend>
          <textarea class="desc" aria-label="Description"></textarea>
        </fieldset>
        <fieldset>
          <legend>Coordinate System</legend>
          <div class="line radios">
            <label><input type="radio" name="csys" checked>World</label>
            <label><input type="radio" name="csys">Selected</label>
          </div>
          <div class="wcs-field">
            <svg class="ic"><use href="#i-wcs"/></svg>
            <input type="text" value="WCS" disabled aria-label="Coordinate system">
          </div>
        </fieldset>
        <fieldset class="definition">
          <legend>Definition</legend>
          <fieldset>
            <legend>Type</legend>
            <select aria-label="Type"><option>Symbolic</option></select>
          </fieldset>
          <fieldset>
            <legend>Symbolic Expression</legend>
            <textarea class="expr" aria-label="Symbolic Expression">50-50*X</textarea>
            <button type="button" class="btn wide">Available function components ...</button>
          </fieldset>
        </fieldset>
        <fieldset class="warning">
          <legend>Warning</legend>
          <p>Angular coordinates, arguments of trigonometric functions,<br>and values returned by inverse trigonometric functions<br>are interpreted as radians.</p>
        </fieldset>
        <div class="dialog-actions">
          <button type="button" class="btn">Review</button>
          <span class="grow"></span>
          <button type="button" class="btn primary">OK</button>
          <button type="button" class="btn">Cancel</button>
        </div>
      </form>
    </div>
  </main>

  <div class="statusbar">
    <button class="pressed" aria-label="Navigator"><svg class="ic"><use href="#i-nav"/></svg></button>
    <button aria-label="Browser"><svg class="ic"><use href="#i-browser"/></svg></button>
    <button class="ruled" aria-label="Full screen"><svg class="ic"><use href="#i-screen"/></svg></button>
    <span class="grow"></span>
    <div class="find">
      <button aria-label="Find"><svg class="ic"><use href="#i-find"/></svg></button>
      <button class="drop box" aria-label="Find options"></button>
    </div>
    <select class="filter" aria-label="Selection filter"><option>All</option></select>
  </div>

  <footer class="taskbar">
    <button class="start" aria-label="Start"><svg class="ic"><use href="#i-win"/></svg></button>
    <label class="win-search"><svg class="ic"><use href="#i-mag"/></svg><input type="text" placeholder="Type here to search"></label>
    <button class="app" aria-label="Task view"><svg class="ic"><use href="#i-task"/></svg></button>
    <button class="app open" aria-label="Edge"><svg class="ic-m"><use href="#i-edge"/></svg></button>
    <button class="app open current" aria-label="Creo"><svg class="ic-m"><use href="#i-app"/></svg></button>
    <span class="grow"></span>
    <div class="tray">
      <svg class="ic"><use href="#i-steam"/></svg>
      <svg class="ic"><use href="#i-nv"/></svg>
      <svg class="ic"><use href="#i-shield"/></svg>
      <svg class="ic"><use href="#i-net"/></svg>
      <svg class="ic"><use href="#i-vol"/></svg>
    </div>
    <div class="clock">17:37<br>27/03/2024</div>
  </footer>

</body>
</html>
```
FILE: styles.css
```css
* {
  box-sizing: border-box;
}

body {
  margin: 0;
  height: 100vh;
  display: flex;
  flex-direction: column;
  overflow: hidden;
  font-family: "Noto Sans", "Open Sans", sans-serif;
  font-size: 6px;
  line-height: 8px;
  color: #2d3335;
  background: #e7e9ed;
}

button, input, select, textarea {
  font: inherit;
  color: inherit;
  margin: 0;
  padding: 0;
  border: 0;
  border-radius: 0;
  background: none;
}

svg {
  display: block;
  flex: none;
}

.sprite {
  position: absolute;
  width: 0;
  height: 0;
}

.ic { width: 9px; height: 9px; }
.ic-s { width: 6px; height: 6px; }
.ic-m { width: 13px; height: 13px; }

.grow {
  flex: 1;
  min-width: 0;
}

.drop::after,
.caret {
  content: "";
  display: inline-block;
  border: 2px solid transparent;
  border-top-color: #444;
  border-bottom: 0;
}

.soft::after {
  border-top-color: #a4aaab;
}

/* title bar */

.titlebar {
  display: grid;
  grid-template-columns: 1fr auto 1fr;
  align-items: center;
  height: 15px;
  background: #dadfdf;
  border-bottom: 1px solid #a9bab7;
}

.quick {
  display: flex;
  align-items: center;
  gap: 3px;
}

.quick button {
  display: flex;
  align-items: center;
  gap: 3px;
}

.quick .drop {
  padding-right: 2px;
}

.quick .last {
  border-right: 1px solid #b9c0c0;
  padding: 0 3px 0 2px;
  margin-right: 2px;
}

.brand {
  display: flex;
  align-items: center;
  gap: 2px;
  width: 42px;
  padding-left: 4px;
  font-size: 9px;
  color: #333c3e;
}

.brand sup {
  font-size: 5px;
  margin-left: -2px;
}

.app-title {
  font-family: Roboto, "Noto Sans", sans-serif;
  font-size: 7px;
  color: #b0b6b6;
}

.win-controls {
  display: flex;
  justify-content: flex-end;
  gap: 8px;
  padding-right: 6px;
  color: #8e9596;
}

/* ribbon tabs */

.tabs {
  display: flex;
  height: 13px;
  background: #3c4545;
}

.tab {
  font-weight: 600;
  color: #e8ecec;
}

.file {
  width: 31px;
  background: linear-gradient(#67bd45, #4fa52e);
}

.home {
  width: 42px;
  background: #fafbfd;
  color: #4b9a33;
}

.refine { width: 64px; }
.inspect { width: 48px; }
.tools { width: 38px; }
.view { width: 40px; }
.flexible { width: 78px; }

.tab-tools {
  display: flex;
  align-items: center;
  gap: 6px;
  margin-left: auto;
  padding-right: 4px;
  color: #fff;
  font-weight: 700;
}

.tab-tools button {
  display: flex;
  align-items: center;
  gap: 3px;
}

.tab-tools .drop::after {
  border-top-color: #fff;
}

/* ribbon */

.ribbon {
  display: flex;
  height: 56px;
  background: #fafbfd;
  border-bottom: 1px solid #c3d2d1;
}

.group {
  display: flex;
  flex-direction: column;
  padding: 1px 2px 0 1px;
  border-right: 1px solid #d4d8da;
}

.setup { width: 82px; }
.operations { width: 67px; }
.loads { width: 126px; }
.constraints { width: 77px; }
.materials { width: 76px; }
.run { width: 86px; }
.close { width: 25px; }

.group-body {
  flex: 1;
  display: flex;
  justify-content: space-between;
}

.group-label {
  height: 10px;
  line-height: 10px;
  text-align: center;
}

.group-label.drop::after {
  margin-left: 3px;
  vertical-align: 2px;
}

.big {
  display: flex;
  flex-direction: column;
  align-items: center;
  min-width: 22px;
  height: 42px;
  margin-top: 1px;
  padding-top: 2px;
  line-height: 7px;
}

.big svg {
  width: 17px;
  height: 17px;
  margin-bottom: 6px;
}

.big.active {
  width: 30px;
  background: #dfe1e4;
  outline: 1px solid #c8cbce;
  outline-offset: -1px;
}

.big .caret {
  margin-top: 2px;
}

.close .big {
  flex: 1;
}

.stack {
  display: flex;
  flex-direction: column;
}

.small {
  display: flex;
  align-items: center;
  gap: 2px;
  height: 14px;
  white-space: nowrap;
}

.small svg {
  width: 9px;
  height: 9px;
}

.small:disabled {
  color: #a9adae;
}

.materials .stack {
  padding-left: 2px;
}

/* left panel */

.work {
  flex: 1;
  display: flex;
  min-height: 0;
}

.panel {
  width: 147px;
  background: #f8fafb;
  border-right: 1px solid #ccd1d3;
}

.panel-tabs {
  display: flex;
  height: 14px;
  background: #dadfdf;
}

.panel-tabs button {
  display: grid;
  place-items: center;
  width: 16px;
}

.panel-tabs .on {
  background: #f8fafb;
}

.panel-tools {
  display: flex;
  align-items: center;
  justify-content: space-between;
  height: 17px;
  padding: 0 4px 0 5px;
}

.panel-tools .rule {
  width: 1px;
  height: 12px;
  background: #cdd2d4;
}

.grip {
  padding-right: 3px;
  margin-right: 6px;
  border-right: 1px dotted #aaa;
}

.pressed {
  background: #d9dcdf;
  outline: 1px solid #b9bdc0;
  outline-offset: 1px;
}

.more {
  margin-left: 10px;
  font-size: 9px;
}

.panel-search {
  display: flex;
  align-items: center;
  gap: 6px;
  padding: 0 6px;
  margin-bottom: 3px;
}

.search-box {
  flex: 1;
  display: flex;
  align-items: center;
  height: 13px;
  margin: 0 -3px 0 -5px;
  padding-right: 2px;
  border: 1px solid #b5c3c6;
  background: #fff;
  color: #888;
}

.search-box input {
  flex: 1;
  min-width: 0;
}

.tree {
  list-style: none;
  display: flex;
  flex-direction: column;
  justify-content: space-between;
  margin: 0;
  padding: 0 0 0 8px;
}

.model-tree { height: 76px; }
.sim-tree { height: 56px; }

.tree li {
  display: flex;
  align-items: center;
  line-height: 9px;
  white-space: nowrap;
}

.tree svg {
  width: 8px;
  height: 8px;
  margin-right: 3px;
}

.tree i {
  width: 8px;
}

.tree .root {
  margin-left: -2px;
}

.tree .root svg {
  margin-right: 2px;
}

.fold::before {
  content: "";
  display: block;
  width: 0;
  border: 2px solid transparent;
  border-left: 4px solid #6d7375;
  border-right: 0;
}

.fold.open::before {
  border: 2px solid transparent;
  border-top: 4px solid #6d7375;
  border-bottom: 0;
}

.lvl2 { padding-left: 10px; }
.lvl3 { padding-left: 20px; }

.muted {
  color: #a9a795;
}

.insert-line {
  height: 1px;
  margin: 3px 3px 4px 6px;
  background: #3fd31f;
}

/* graphics area */

.viewport {
  position: relative;
  flex: 1;
  display: flex;
  flex-direction: column;
  align-items: center;
  padding-top: 4px;
  min-width: 0;
}

.scene {
  position: absolute;
  inset: 0;
  width: 100%;
  height: 100%;
}

.view-tools {
  position: relative;
  display: flex;
  align-items: center;
  justify-content: space-between;
  width: 192px;
  height: 16px;
  padding: 0 3px;
  border: 1px solid #c3c8ca;
  background: #f6f8f9;
}

.mode-text {
  align-self: flex-start;
  margin: auto 0 32px 6px;
  font-family: "Liberation Sans", Arial, sans-serif;
  font-size: 7px;
  color: #8e9296;
}

.wcs-box {
  position: absolute;
  right: 0;
  bottom: 0;
  width: 59px;
  height: 65px;
  border: 1px solid #8a62ad;
  border-right: 0;
  border-bottom: 0;
  font-family: "Liberation Sans", Arial, sans-serif;
  font-size: 9px;
  line-height: 10px;
  color: #6f3b9b;
}

.wcs-box span {
  padding-left: 1px;
}

.wcs-box svg {
  width: 58px;
  height: 52px;
}

.wcs-box text {
  font-size: 8px;
  fill: #6f3b9b;
}

/* dialogs */

.dialog {
  position: absolute;
  background: #eff1f2;
  border: 1px solid #a3a8aa;
  box-shadow: 1px 2px 4px rgba(0, 0, 0, 0.4);
}

.function {
  top: 53px;
  right: 79px;
  width: 195px;
}

.force {
  top: 0;
  right: 0;
  width: 185px;
  color: #a0a4a6;
  border-color: #c5c9cb;
}

.dialog-title {
  display: flex;
  align-items: center;
  justify-content: space-between;
  height: 15px;
  margin-bottom: 1px;
  padding: 0 5px;
  background: #d9dedf;
}

.dialog-title::before {
  content: "";
  width: 6px;
}

.force .dialog-title {
  background: #eceeef;
  color: #8b9092;
}

.dialog fieldset {
  min-width: 0;
  margin: 0 2px 2px;
  padding: 0 4px 3px;
  border: 1px solid #cfd4d6;
}

.dialog legend {
  margin-left: 2px;
  padding: 0 3px;
}

.dialog input[type="text"],
.dialog textarea,
.dialog select,
.wcs-field {
  display: block;
  width: 100%;
  height: 12px;
  padding: 0 2px;
  border: 1px solid #b7bcbf;
  background: #fff;
}

.dialog .line {
  display: flex;
  gap: 3px;
}

.dialog textarea {
  resize: none;
}

.dialog textarea.desc { height: 37px; }
.dialog textarea.expr { height: 28px; margin-bottom: 3px; }

.dialog select,
.filter {
  appearance: none;
  background:
    linear-gradient(45deg, transparent 50%, #444 50%) right 4px center / 2px 2px no-repeat,
    linear-gradient(-45deg, transparent 50%, #444 50%) right 2px center / 2px 2px no-repeat,
    linear-gradient(#b7bcbf, #b7bcbf) right 7px center / 1px 100% no-repeat,
    #f8f8f8;
}

.dialog .lilac,
.wcs-field {
  background: #f6f3fa;
}

.dialog .description {
  padding-top: 2px;
}

.radios {
  align-items: center;
  height: 11px;
  padding-top: 1px;
}

.radios label {
  display: flex;
  align-items: center;
  gap: 3px;
}

input[type="radio"] {
  appearance: none;
  width: 7px;
  height: 7px;
  border: 1px solid #666;
  border-radius: 50%;
  background: #fff;
}

input[type="radio"]:checked {
  background: radial-gradient(#222 0 1px, #fff 2px);
}

.wcs-field {
  display: flex;
  align-items: center;
  border-color: #d5d6dc;
}

.dialog .wcs-field input {
  border: 0;
  height: 10px;
  padding: 0;
  background: none;
  color: #96999d;
}

.dialog .definition {
  padding: 1px 3px 0;
}

.definition fieldset {
  padding-right: 3px;
  padding-left: 3px;
}

.warning p {
  margin: 1px 0;
}

.dialog-actions {
  display: flex;
  gap: 4px;
  margin: 6px 2px 0;
  padding: 5px 3px;
  border-top: 1px solid #cbd0d2;
}

.btn {
  min-width: 30px;
  height: 12px;
  line-height: 10px;
  border: 1px solid #b4b9bc;
  background: #f9fafa;
}

.primary {
  background: #97dcfd;
  border-color: #7cc4e8;
}

.wide {
  width: 100%;
  padding: 0 2px;
  text-align: left;
}

.force .btn {
  background: #e6e8ea;
  border-color: #d2d6d8;
}

.dialog.force input[type="text"],
.dialog.force textarea,
.dialog.force select {
  border-color: #d4d7d9;
}

.force input[type="radio"] {
  border-color: #bbb;
}

.icon {
  display: grid;
  place-items: center;
  min-width: 17px;
}

.force .new { min-width: 28px; }
.force .adv { min-width: 48px; }

.force .end {
  justify-content: flex-end;
  height: 12px;
  padding: 0 32px 0 0;
}

.dialog .refs {
  margin: 6px 2px 5px;
  padding-top: 4px;
  height: 83px;
}

.dialog .refs textarea {
  height: 38px;
}

.dialog .props {
  padding-top: 4px;
  height: 88px;
}

.force .props select {
  margin-top: 9px;
}

.force .props select:last-child {
  margin-top: 3px;
}

.selected-label {
  display: flex;
  justify-content: flex-end;
  gap: 3px;
  padding: 2px 52px 2px 0;
}

.pair {
  display: grid;
  grid-template-columns: 1fr 1fr;
}

.dialog .moment {
  grid-column: 2;
  padding-top: 1px;
}

.dialog .moment input {
  width: 60px;
  margin: 1px 0 1px auto;
}

.force .dialog-actions {
  margin-top: 4px;
}

/* status bar */

.statusbar {
  display: flex;
  align-items: center;
  gap: 5px;
  height: 18px;
  padding: 0 9px 0 5px;
  background: #f7fafb;
  border-top: 1px solid #c9ced0;
}

.statusbar .ruled {
  padding-right: 6px;
  border-right: 1px solid #c9ced0;
}

.find {
  display: flex;
  align-items: center;
  gap: 2px;
  margin-right: 42px;
  padding-left: 4px;
  border-left: 3px double #c9ced0;
}

.find .box {
  width: 9px;
  height: 12px;
  line-height: 6px;
  border: 1px solid #c9ced0;
  background: #e3e6e8;
}

.filter {
  width: 86px;
  height: 12px;
  padding: 0 3px;
  border: 1px solid #b7bcbf;
}

/* taskbar */

.taskbar {
  display: flex;
  align-items: stretch;
  height: 21px;
  background: #17203c;
  color: #fff;
}

.start {
  display: grid;
  place-items: center;
  width: 25px;
}

.win-search {
  display: flex;
  align-items: center;
  gap: 5px;
  width: 179px;
  padding-left: 6px;
  background: #f0f1f2;
  color: #333;
  font-size: 7px;
}

.win-search input {
  flex: 1;
}

.win-search input::placeholder {
  color: #4a4a4a;
}

.app {
  display: grid;
  place-items: center;
  width: 26px;
  border-bottom: 1px solid transparent;
}

.app.open {
  border-bottom-color: #76b9ed;
}

.current {
  background: #434b63;
}

.tray {
  display: flex;
  align-items: center;
  gap: 4px;
}

.clock {
  width: 42px;
  margin-right: 1px;
  padding-top: 1px;
  text-align: center;
  line-height: 9px;
}
```
